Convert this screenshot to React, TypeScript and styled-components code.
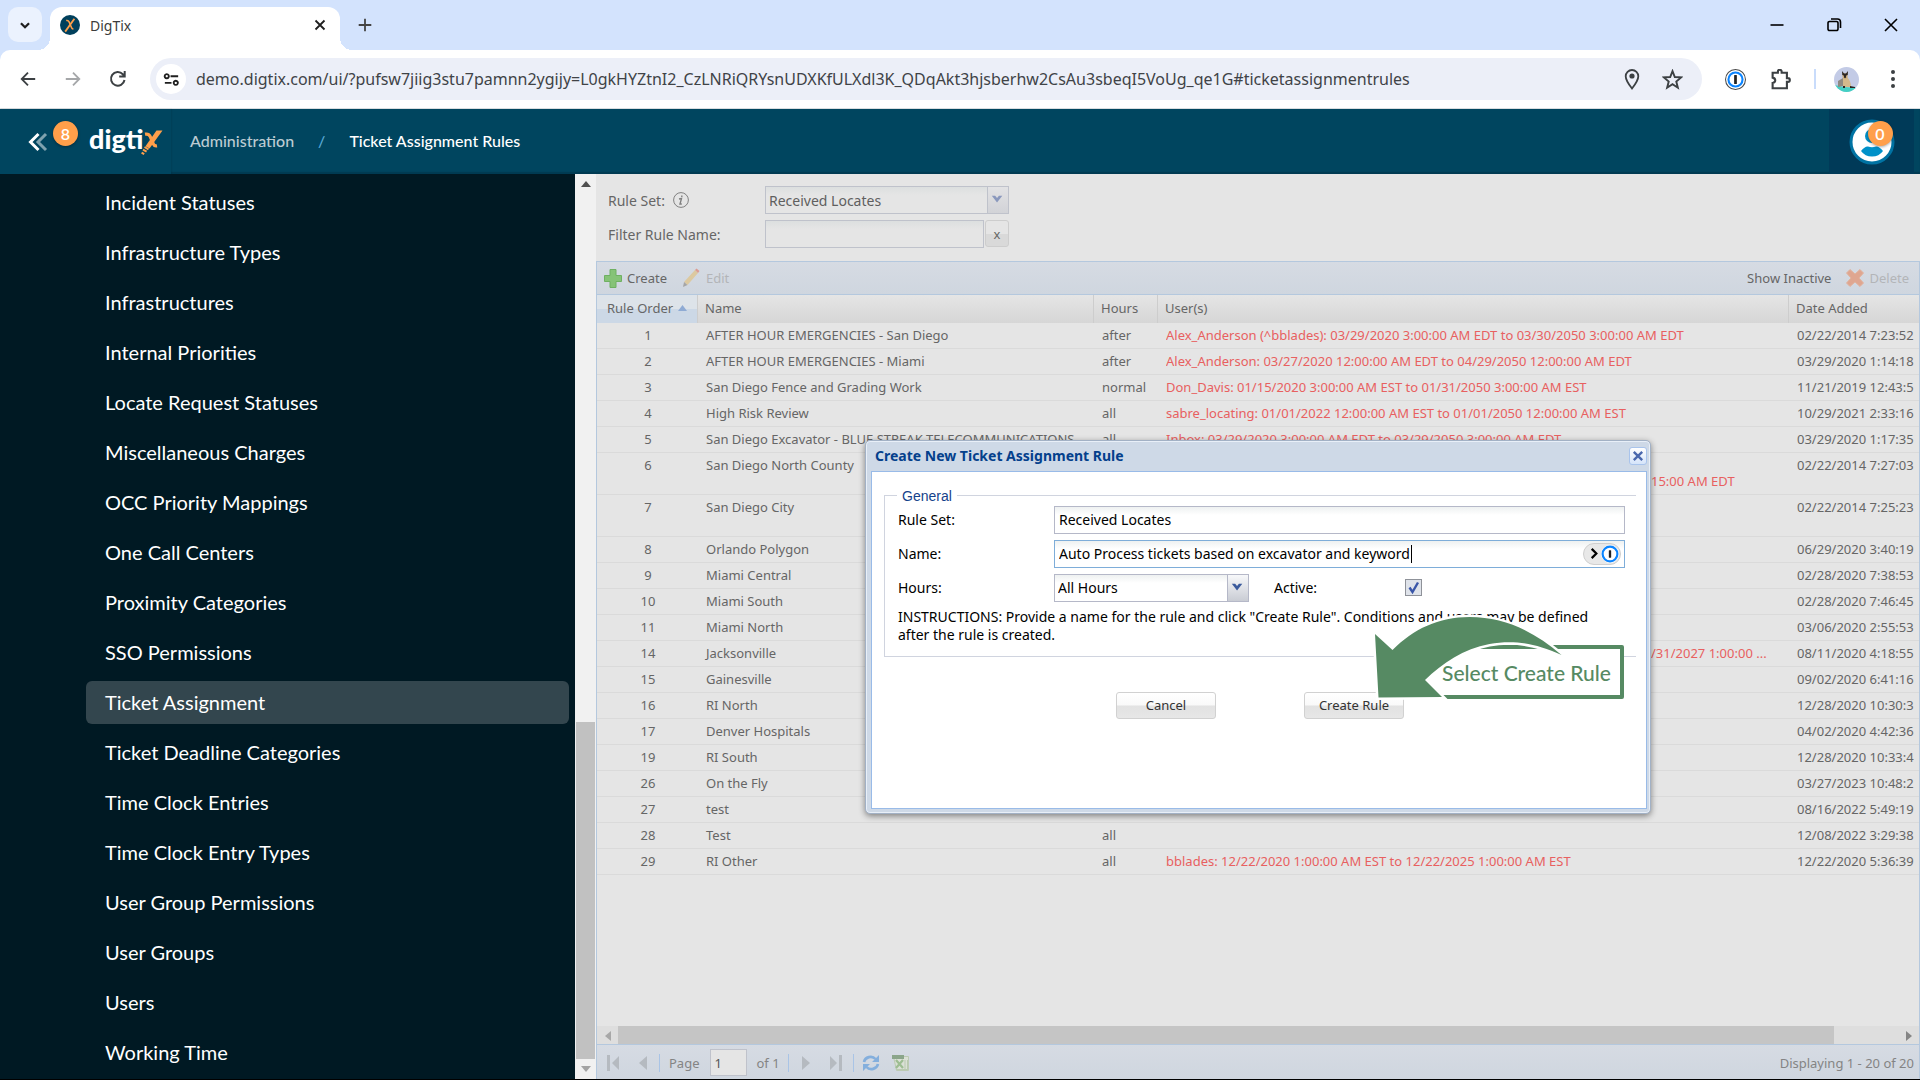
import React from "react";
import styled, { createGlobalStyle, css } from "styled-components";

const UI = '"Noto Sans", "Open Sans", sans-serif';
const BRAND = 'Lato, "Open Sans", sans-serif';

const GlobalStyle = createGlobalStyle`
  *, *::before, *::after { box-sizing: border-box; }
  body { margin: 0; font-family: ${UI}; font-size: 13px; background: #000; }
  button, input, select { font: inherit; color: inherit; margin: 0; }
  button { cursor: pointer; }
  a { color: inherit; text-decoration: none; }
`;

const Page = styled.div`
  display: flex;
  flex-direction: column;
  height: 100vh;
  overflow: hidden;
  border-bottom: 1px solid #000;
`;

/* ---------- browser chrome ---------- */

const TabStrip = styled.div`
  display: flex;
  align-items: flex-end;
  height: 50px;
  flex: none;
  background: #d3e3fd;
  padding: 0 1px 0 8px;
`;

const BareButton = styled.button`
  display: grid;
  place-items: center;
  border: 0;
  padding: 0;
  background: none;
`;

const TabSearch = styled(BareButton)`
  width: 34px;
  height: 35px;
  border-radius: 10px;
  background: #ebf2fe;
  margin-bottom: 8px;
`;

const Tab = styled.div`
  position: relative;
  display: flex;
  align-items: center;
  width: 290px;
  height: 43px;
  margin-left: 8px;
  padding: 0 9px 7px 10px;
  border-radius: 12px 12px 0 0;
  background: #fff;
  color: #3c3c3c;
  font-size: 14px;
  &::before, &::after {
    content: "";
    position: absolute;
    bottom: 0;
    width: 12px;
    height: 12px;
  }
  &::before { left: -12px; background: radial-gradient(circle at 0 0, transparent 12px, #fff 12px); }
  &::after { right: -12px; background: radial-gradient(circle at 100% 0, transparent 12px, #fff 12px); }
`;

const TabTitle = styled.span`
  flex: 1;
  margin-left: 10px;
`;

const TabButton = styled(BareButton)`
  width: 22px;
  height: 22px;
`;

const NewTab = styled(BareButton)`
  width: 34px;
  height: 35px;
  margin: 0 0 8px 8px;
`;

const WindowControls = styled.div`
  display: flex;
  align-self: stretch;
  margin-left: auto;
`;

const WindowButton = styled(BareButton)`
  width: 57px;
  height: 50px;
`;

const ToolbarBack = styled.div`
  flex: none;
  background: #d3e3fd;
`;

const Toolbar = styled.div`
  display: flex;
  align-items: center;
  height: 59px;
  padding: 0 11px;
  border-radius: 10px 10px 0 0;
  border-bottom: 1px solid #d9dde0;
  background: #fff;
`;

const ToolButton = styled(BareButton)`
  width: 33px;
  height: 33px;
  flex: none;
  & + & { margin-left: 12px; }
`;

const AddressBar = styled.div`
  display: flex;
  align-items: center;
  flex: 1;
  min-width: 0;
  height: 42px;
  margin: 0 17px 0 16px;
  padding: 0 14px 0 6px;
  border-radius: 21px;
  background: #eceff8;
`;

const SiteInfo = styled(BareButton)`
  width: 30px;
  height: 30px;
  border-radius: 50%;
  background: #fff;
  flex: none;
`;

const UrlInput = styled.input`
  flex: 1;
  min-width: 0;
  border: 0;
  padding: 0 0 1px 10px;
  background: none;
  outline: none;
  font-size: 16px;
  color: #404347;
`;

const AddressAction = styled(BareButton)`
  width: 32px;
  height: 32px;
  flex: none;
  & + & { margin-left: 8px; }
`;

const ToolDivider = styled.span`
  width: 2px;
  height: 20px;
  margin: 0 18px 0 17px;
  background: #c9dcfb;
`;

const Profile = styled(BareButton)`
  width: 25px;
  height: 25px;
  margin-right: 17px;
`;

/* ---------- application header ---------- */

const Header = styled.header`
  display: flex;
  align-items: stretch;
  flex: none;
  height: 65px;
  padding-right: 6px;
  background: #00455f;
  box-shadow: inset 0 -2px 1px #003a52;
  color: #fff;
  font-family: ${BRAND};
`;

const BrandBlock = styled.div`
  display: flex;
  align-items: center;
  width: 171px;
  padding-left: 28px;
  background: #00455f;
  box-shadow: 1px 0 1px rgba(0, 30, 45, 0.12);
`;

const Collapse = styled(BareButton)`
  position: relative;
  width: 20px;
  height: 24px;
`;

const Badge = styled.span<{ $left: number; $top: number }>`
  position: absolute;
  left: ${(p) => p.$left}px;
  top: ${(p) => p.$top}px;
  display: grid;
  place-items: center;
  width: 25px;
  height: 25px;
  border-radius: 50%;
  background: #ff9f4a;
  box-shadow: 0 1px 3px rgba(0, 0, 0, 0.35);
  color: #fff;
  font-family: ${BRAND};
  font-size: 16px;
  font-weight: 600;
`;

const Logo = styled.a`
  display: flex;
  align-items: center;
  margin-left: 41px;
  padding-bottom: 6px;
  font-size: 27px;
  font-weight: 900;
  line-height: 30px;
  svg { margin: 8px 0 0 -3px; }
`;

const Crumbs = styled.nav`
  display: flex;
  flex: 1;
  align-items: center;
  gap: 24px;
  padding: 0 0 3px 19px;
  font-size: 16px;
  font-weight: 500;
  a { color: #bccbd2; }
  i { color: #5aa9d6; font-style: normal; }
`;

const UserMenu = styled(BareButton)`
  width: 85px;
  background: #003a58;
`;

const UserBadgeWrap = styled.span`
  position: relative;
  display: block;
  width: 46px;
  height: 46px;
`;

/* ---------- body ---------- */

const Body = styled.div`
  display: flex;
  flex: 1;
  min-height: 0;
`;

const Sidebar = styled.nav`
  display: flex;
  width: 596px;
  flex: none;
  background: #001923;
`;

const MenuList = styled.ul`
  display: flex;
  flex: 1;
  flex-direction: column;
  gap: 7px;
  margin: 0;
  padding: 7px 6px 0 86px;
  list-style: none;
  overflow: hidden;
`;

const MenuLink = styled.a<{ $active: boolean }>`
  display: flex;
  align-items: center;
  height: 43px;
  padding: 0 0 2px 19px;
  border-radius: 6px;
  color: #fff;
  font-family: ${BRAND};
  font-size: 20px;
  background: ${(p) => (p.$active ? "#33464e" : "transparent")};
`;

const VScroll = styled.div`
  display: flex;
  flex-direction: column;
  width: 21px;
  background: #f1f1f1;
`;

const VTrack = styled.div`
  flex: 1;
  display: flex;
  flex-direction: column;
  justify-content: flex-end;
  padding: 0 1px;
`;

const VThumb = styled.div`
  height: 39%;
  background: #c1c1c1;
`;

const ScrollArrow = styled(BareButton)`
  width: 21px;
  height: 20px;
`;

const Main = styled.main`
  position: relative;
  display: flex;
  flex: 1;
  flex-direction: column;
  min-width: 0;
  background: #e5e5e5;
  color: #666;
`;

const FilterForm = styled.form`
  display: grid;
  grid-template-columns: 157px 244px;
  grid-auto-rows: 28px;
  row-gap: 6px;
  align-items: center;
  padding: 12px 12px 13px;
  font-size: 14px;
`;

const FieldLabel = styled.label`
  display: flex;
  align-items: center;
  gap: 8px;
`;

const SelectBox = styled.span<{ $dim?: boolean; $width: number }>`
  position: relative;
  display: block;
  width: ${(p) => p.$width}px;
  height: 28px;
  select {
    appearance: none;
    width: 100%;
    height: 28px;
    padding: 0 24px 0 3px;
    border: 1px solid ${(p) => (p.$dim ? "#bfc2cb" : "#b5b8c8")};
    border-radius: 0;
    outline: none;
    background: ${(p) =>
      p.$dim ? "linear-gradient(#dcdfdf, #e5e5e5 8px)" : "linear-gradient(#eef1f1, #fff 8px)"};
    color: ${(p) => (p.$dim ? "#5f5f5f" : "#000")};
  }
  svg {
    position: absolute;
    top: 1px;
    right: 1px;
    width: 21px;
    height: 26px;
    border-left: 1px solid ${(p) => (p.$dim ? "#bfc2cb" : "#b5b8c8")};
    background: ${(p) =>
      p.$dim ? "linear-gradient(#e2e2e4, #d2d3d7)" : "linear-gradient(#f7f8fa, #c9ccd4)"};
    pointer-events: none;
  }
`;

const FilterBox = styled.span`
  display: flex;
  gap: 1px;
  input {
    flex: 1;
    min-width: 0;
    height: 28px;
    padding: 0 4px;
    border: 1px solid #bfc2cb;
    outline: none;
    background: linear-gradient(#dcdfdf, #e5e5e5 8px);
  }
  button {
    width: 24px;
    height: 27px;
    padding: 0;
    border: 1px solid #cdcdcd;
    border-radius: 3px;
    background: linear-gradient(#e5e5e5 50%, #d9d9d9 50%);
    font-size: 13px;
    line-height: 24px;
  }
`;

const GridBar = styled.div`
  display: flex;
  align-items: center;
  flex: none;
  height: 34px;
  padding: 0 10px 0 7px;
  border: 1px solid #b4c8de;
  background: linear-gradient(#d6dbe3, #cfd6df);
`;

const BarButton = styled.button<{ $muted?: boolean }>`
  display: flex;
  align-items: center;
  gap: 5px;
  padding: 0;
  border: 0;
  background: none;
  color: ${(p) => (p.$muted ? "#b3b5b8" : "#666")};
  line-height: 20px;
`;

const BarSpace = styled.span<{ $w?: number }>`
  ${(p) => (p.$w ? css`width: ${p.$w}px;` : css`flex: 1;`)}
`;

const GridBody = styled.div`
  flex: 1;
  min-height: 0;
  overflow: hidden;
  border-left: 1px solid #b4c8de;
  border-right: 1px solid #b4c8de;
`;

const RuleTable = styled.table`
  width: 100%;
  table-layout: fixed;
  border-collapse: separate;
  border-spacing: 0;
  line-height: 16px;
  th {
    height: 28px;
    padding: 0 7px 3px;
    border-right: 1px solid #cdcdcd;
    background: linear-gradient(#e5e5e5, #d6d6d6);
    font-weight: 400;
    text-align: left;
    white-space: nowrap;
  }
  th:first-child {
    padding-left: 10px;
    background: linear-gradient(#dde3e9 50%, #ccd8e6 50%);
  }
  td {
    padding: 4px 7px 5px 8px;
    border-bottom: 1px solid #dadada;
    overflow: hidden;
    text-overflow: ellipsis;
    white-space: nowrap;
    vertical-align: top;
  }
  td:first-child { text-align: center; }
  td:last-child { padding-right: 0; text-overflow: clip; }
  th:last-child { border-right: 0; }
`;

const UserLine = styled.div`
  min-height: 16px;
  overflow: hidden;
  text-overflow: ellipsis;
  color: #e86060;
`;

const UserTail = styled(UserLine)`
  padding-left: 485px;
`;

const SortMark = styled.svg`
  margin: 0 0 2px 5px;
`;

const HScroll = styled.div`
  display: flex;
  flex: none;
  height: 18px;
  border-left: 1px solid #b4c8de;
  border-right: 1px solid #b4c8de;
  background: #dedede;
`;

const HTrack = styled.div`
  flex: 1;
`;

const HThumb = styled.div`
  width: 95%;
  height: 18px;
  background: #c5c5c5;
`;

const Paging = styled(GridBar)`
  height: 35px;
  padding: 1px 5px 0 8px;
  border-bottom: 0;
  color: #848484;
`;

const PageIcon = styled(BareButton)`
  width: 16px;
  height: 20px;
`;

const PageRule = styled.span<{ $before: number; $after: number }>`
  width: 1px;
  height: 18px;
  margin: 0 ${(p) => p.$after}px 0 ${(p) => p.$before}px;
  background: #a9c4e6;
`;

const PageLabel = styled.label`
  display: flex;
  align-items: center;
  gap: 10px;
  input {
    width: 37px;
    height: 27px;
    padding: 0 4px;
    border: 1px solid #bfc2cb;
    outline: none;
    background: #e5e5e5;
    color: #555;
  }
`;

/* ---------- dialog ---------- */

const DialogLayer = styled.div`
  position: absolute;
  inset: 0;
  display: grid;
  place-items: center;
`;

const Dialog = styled.section`
  position: relative;
  display: flex;
  flex-direction: column;
  width: 786px;
  height: 374px;
  padding: 0 3px 4px 5px;
  border: 1px solid #a2b1c5;
  border-radius: 5px;
  background: #ced9e7;
  box-shadow: inset 0 0 0 1px #e8eff8, 0 2px 6px rgba(0, 0, 0, 0.45);
  color: #000;
  font-size: 14px;
`;

const DialogHead = styled.header`
  display: flex;
  align-items: center;
  justify-content: space-between;
  height: 30px;
  padding: 0 0 0 4px;
  color: #04408c;
  h2 { margin: 0; font-size: 14px; font-weight: 700; line-height: 20px; }
`;

const CloseButton = styled(BareButton)`
  width: 18px;
  height: 18px;
  border: 1px solid #a9c4ec;
  border-radius: 3px;
  background: linear-gradient(#fff, #d5e4fa);
`;

const DialogBody = styled.form`
  flex: 1;
  padding: 15px 10px 0 12px;
  border: 1px solid #99bbe8;
  background: #fff;
`;

const General = styled.fieldset`
  margin: 0;
  padding: 1px 11px 12px 13px;
  border: 1px solid #d0d4df;
  border-right: 0;
  min-width: 0;
  legend {
    margin-left: -1px;
    padding: 0 5px;
    font-family: "Liberation Sans", Arial, sans-serif;
    font-size: 14px;
    line-height: 18px;
    color: #15428b;
  }
`;

const FormGrid = styled.div`
  display: grid;
  grid-template-columns: 156px 1fr;
  grid-auto-rows: 28px;
  row-gap: 6px;
  align-items: center;
`;

const TextInput = styled.input<{ $focused?: boolean }>`
  width: 100%;
  height: 28px;
  padding: 0 4px;
  border: 1px solid ${(p) => (p.$focused ? "#7eadd9" : "#b5b8c8")};
  outline: none;
  background: linear-gradient(#eef1f1, #fff 8px);
`;

const NameBox = styled.span`
  position: relative;
  display: block;
`;

const Caret = styled.span`
  position: absolute;
  left: 357px;
  top: 5px;
  width: 1px;
  height: 18px;
  background: #000;
`;

const FillButton = styled(BareButton)`
  position: absolute;
  top: 3px;
  right: 4px;
  display: flex;
  align-items: center;
  justify-content: space-between;
  width: 38px;
  height: 22px;
  padding: 0 1px 0 4px;
  border: 1px solid #cfcfcf;
  border-radius: 11px;
  background: #e8e8e8;
`;

const HoursRow = styled.div`
  display: flex;
  align-items: center;
  label { width: 131px; margin-left: 25px; }
`;

const CheckBox = styled.input`
  appearance: none;
  width: 17px;
  height: 17px;
  border: 1px solid #8f9299;
  background: #dfe3ea url("data:image/svg+xml,%3Csvg xmlns='http://www.w3.org/2000/svg' viewBox='0 0 15 15'%3E%3Cpath d='M3.5 7.5l3 4.5L12 2.5' fill='none' stroke='%233a56a8' stroke-width='2.4'/%3E%3C/svg%3E") center / 15px 15px;
`;

const Instructions = styled.p`
  margin: 6px 0 0;
  padding-right: 11px;
  line-height: 18px;
`;

const Actions = styled.div`
  display: flex;
  justify-content: center;
  gap: 88px;
  margin-top: 35px;
`;

const ActionButton = styled.button`
  width: 100px;
  height: 27px;
  padding: 0;
  border: 1px solid #d1d1d1;
  border-radius: 3px;
  background: linear-gradient(#fff, #f9f9f9 48%, #e2e2e2 52%, #e7e7e7);
  color: #333;
  font-size: 13px;
`;

const Callout = styled.div`
  position: absolute;
  left: 502px;
  top: 169px;
  width: 256px;
  height: 96px;
  padding: 35px 0 7px 47px;
  svg { position: absolute; left: 0; top: 0; }
`;

const CalloutText = styled.div`
  display: flex;
  align-items: center;
  justify-content: flex-end;
  height: 54px;
  padding: 2px 9px 0 0;
  border: 4px solid #568a63;
  border-radius: 2px;
  background: #fff;
  color: #568a63;
  font-family: ${BRAND};
  font-size: 21px;
  font-weight: 500;
  span { position: relative; z-index: 1; }
`;

/* ---------- data ---------- */

const menu = [
  "Incident Statuses", "Infrastructure Types", "Infrastructures", "Internal Priorities",
  "Locate Request Statuses", "Miscellaneous Charges", "OCC Priority Mappings",
  "One Call Centers", "Proximity Categories", "SSO Permissions", "Ticket Assignment",
  "Ticket Deadline Categories", "Time Clock Entries", "Time Clock Entry Types",
  "User Group Permissions", "User Groups", "Users", "Working Time",
];

type Rule = { order: number; name: string; hours: string; users: string; tail?: string; date: string };

const rules: Rule[] = [
  { order: 1, name: "AFTER HOUR EMERGENCIES - San Diego", hours: "after", users: "Alex_Anderson (^bblades): 03/29/2020 3:00:00 AM EDT to 03/30/2050 3:00:00 AM EDT", date: "02/22/2014 7:23:52" },
  { order: 2, name: "AFTER HOUR EMERGENCIES - Miami", hours: "after", users: "Alex_Anderson: 03/27/2020 12:00:00 AM EDT to 04/29/2050 12:00:00 AM EDT", date: "03/29/2020 1:14:18" },
  { order: 3, name: "San Diego Fence and Grading Work", hours: "normal", users: "Don_Davis: 01/15/2020 3:00:00 AM EST to 01/31/2050 3:00:00 AM EST", date: "11/21/2019 12:43:5" },
  { order: 4, name: "High Risk Review", hours: "all", users: "sabre_locating: 01/01/2022 12:00:00 AM EST to 01/01/2050 12:00:00 AM EST", date: "10/29/2021 2:33:16" },
  { order: 5, name: "San Diego Excavator - BLUE STREAK TELECOMMUNICATIONS", hours: "all", users: "Inbox: 03/29/2020 3:00:00 AM EDT to 03/29/2050 3:00:00 AM EDT", date: "03/29/2020 1:17:35" },
  { order: 6, name: "San Diego North County", hours: "", users: "", tail: "15:00 AM EDT", date: "02/22/2014 7:27:03" },
  { order: 7, name: "San Diego City", hours: "", users: "", tail: "", date: "02/22/2014 7:25:23" },
  { order: 8, name: "Orlando Polygon", hours: "", users: "", date: "06/29/2020 3:40:19" },
  { order: 9, name: "Miami Central", hours: "", users: "", date: "02/28/2020 7:38:53" },
  { order: 10, name: "Miami South", hours: "", users: "", date: "02/28/2020 7:46:45" },
  { order: 11, name: "Miami North", hours: "", users: "", date: "03/06/2020 2:55:53" },
  { order: 14, name: "Jacksonville", hours: "", users: "/31/2027 1:00:00 ...", date: "08/11/2020 4:18:55" },
  { order: 15, name: "Gainesville", hours: "", users: "", date: "09/02/2020 6:41:16" },
  { order: 16, name: "RI North", hours: "", users: "", date: "12/28/2020 10:30:3" },
  { order: 17, name: "Denver Hospitals", hours: "", users: "", date: "04/02/2020 4:42:36" },
  { order: 19, name: "RI South", hours: "", users: "", date: "12/28/2020 10:33:4" },
  { order: 26, name: "On the Fly", hours: "", users: "", date: "03/27/2023 10:48:2" },
  { order: 27, name: "test", hours: "", users: "", date: "08/16/2022 5:49:19" },
  { order: 28, name: "Test", hours: "all", users: "", date: "12/08/2022 3:29:38" },
  { order: 29, name: "RI Other", hours: "all", users: "bblades: 12/22/2020 1:00:00 AM EST to 12/22/2025 1:00:00 AM EST", date: "12/22/2020 5:36:39" },
];

/* ---------- drawings ---------- */

type StrokeProps = { d: string; size?: number; color?: string; width?: number; box?: number };

const Stroke = ({ d, size = 20, color = "#3c4043", width = 2, box = 20 }: StrokeProps) => (
  <svg width={size} height={size} viewBox={`0 0 ${box} ${box}`} fill="none" stroke={color} strokeWidth={width} aria-hidden="true">
    <path d={d} />
  </svg>
);

const Triangle = ({ d, color }: { d: string; color: string }) => (
  <svg width="10" height="10" viewBox="0 0 10 10" fill={color} aria-hidden="true"><path d={d} /></svg>
);

const Favicon = () => (
  <svg width="20" height="20" viewBox="0 0 20 20" aria-hidden="true">
    <circle cx="10" cy="10" r="10" fill="#00405c" />
    <path d="M6.2 5.6q2-.6 2.8 1.2l2.6 6q.5 1.2 1.8 1" fill="none" stroke="#ff9f4a" strokeWidth="1.6" />
    <path d="M14.4 3.8L5.2 16.6" stroke="#ff9f4a" strokeWidth="1.8" />
  </svg>
);

const LogoX = () => (
  <svg width="23" height="27" viewBox="0 0 23 27" fill="none" stroke="#ff9f4a" aria-hidden="true">
    <path d="M5 5.200c3-.5 4.200.3 5 2l3.400 8c.7 1.600 1.900 2 3.600 1.700" strokeWidth="3.2" />
    <path d="M16.500 1.500h6L9.500 19.500l-4-2.200z" fill="#ff9f4a" stroke="none" />
    <path d="M8.500 20.300l-4-2.300M6.600 22.700l-3.600-2M4.200 25.200l-2.600-1.600" strokeWidth="2" />
  </svg>
);

const OnePass = ({ size, ring }: { size: number; ring?: boolean }) => (
  <svg width={size} height={size} viewBox="0 0 20 20" aria-hidden="true">
    <circle cx="10" cy="10" r="9.5" fill="#fff" stroke={ring ? "#4a4a4a" : "#fff"} strokeWidth="1" />
    <circle cx="10" cy="10" r={ring ? 6.7 : 8.2} fill="#fff" stroke="#0a84ff" strokeWidth={ring ? 2 : 2.4} />
    <rect x="8.7" y="5.8" width="2.6" height="8.4" rx=".5" fill="#222" />
  </svg>
);

const ProfileCat = () => (
  <svg width="25" height="25" viewBox="0 0 25 25" aria-hidden="true">
    <defs><clipPath id="round"><circle cx="12.5" cy="12.5" r="12.5" /></clipPath></defs>
    <g clipPath="url(#round)">
      <path fill="#c3cbe6" d="M0 0h25v25H0z" />
      <path fill="#44d0c4" d="M0 18q12 3 25 3v4H0z" />
      <path fill="#8f8a82" d="M4 14l5-3v8l-5 1z" />
      <path fill="#d3b98c" d="M9 10h4c3 3 4 6 4 10H9z" />
      <path fill="#c9a877" d="M8.500 6.500h5v4l-2.500 2-2.500-2z" />
      <path fill="#2b2522" d="M8 4l2 2.500h2L14 4l-.3 4-1.500.5-.5 2.500h-1.400l-.5-2.500L8.300 8zM9 19h2v2H9zM16 19l5 1v1h-5z" />
    </g>
  </svg>
);

const UserGlyph = () => (
  <svg width="46" height="46" viewBox="0 0 46 46" aria-hidden="true">
    <circle cx="23" cy="23" r="21" fill="#fff" stroke="#0073a3" strokeWidth="3" />
    <circle cx="23" cy="17" r="7" fill="#0091c9" />
    <path d="M12 32q4-5 7-4.500 4 1.500 8 0 3-.5 7 4.500-4 5.500-11 5.500T12 32z" fill="#0091c9" />
  </svg>
);

const PlusIcon = () => (
  <svg width="18" height="19" viewBox="0 0 18 19" aria-hidden="true">
    <path d="M6 .5h6v6h5.500v6H12v6H6v-6H.5v-6H6z" fill="#86c377" stroke="#6fb062" />
  </svg>
);

const PencilIcon = () => (
  <svg width="19" height="20" viewBox="0 0 19 20" aria-hidden="true">
    <path d="M2 14L13 2l3 3L5.500 17z" fill="#dcc9a0" />
    <path d="M13 2l1.500-1.500 3 2.500L16 5z" fill="#dc9c92" />
    <path d="M2 14l3.500 3L1 19z" fill="#a5a5a5" />
  </svg>
);

const DeleteIcon = () => (
  <svg width="18" height="18" viewBox="0 0 18 18" aria-hidden="true">
    <path d="M4 .5L9 5l5-4.500L17.500 4 13 9l4.500 5-3.500 3.500L9 13l-5 4.500L.5 14 5 9 .5 4z" fill="#dfa690" stroke="#e0b39f" />
  </svg>
);

const RefreshIcon = () => (
  <svg width="18" height="18" viewBox="0 0 18 18" fill="none" aria-hidden="true">
    <path d="M2 8c1-5 8-7 11.500-3M16 10c-1 5-8 7-11.500 3" stroke="#84afdd" strokeWidth="2.6" />
    <path d="M17 1v7h-7zM1 17v-7h7z" fill="#84afdd" />
  </svg>
);

const SheetIcon = () => (
  <svg width="18" height="18" viewBox="0 0 18 18" aria-hidden="true">
    <path fill="#dbe0d6" stroke="#bccab3" d="M1.500 2.500h15v14h-12z" />
    <path fill="#8ba58a" d="M0 1h12v4H0z" />
    <path d="M4 6l7 8M11 6l-7 8" stroke="#9dbd92" strokeWidth="2.2" />
    <path d="M13 6v9M15.500 6v9M4 15.500h12" stroke="#b9cab0" />
  </svg>
);

const CalloutArrow = () => (
  <svg width="256" height="96" viewBox="1368 610 256 96" aria-hidden="true">
    <path
      d="M1375 634l17.500 16c21-21 46-33 77-33 35 0 64 14 92 38-28-13-50-15-72-11-26 5-47 19-64.500 36l17 17-63.500.500z"
      fill="#568a63" stroke="#fff" strokeWidth="5" paintOrder="stroke" strokeLinejoin="miter"
    />
  </svg>
);

const Down = ({ color }: { color: string }) => (
  <svg viewBox="0 0 21 26" aria-hidden="true"><path d="M4 8.500h3.500l2 2.500 2-2.500H15l-5.500 7z" fill={color} /></svg>
);

/* ---------- page ---------- */

export default function App() {
  return (
    <Page>
      <GlobalStyle />
      <TabStrip>
        <TabSearch aria-label="Search tabs"><Stroke d="M5.500 8l4.500 4.500L14.500 8" width={2.5} size={18} color="#1f1f1f" /></TabSearch>
        <Tab>
          <Favicon />
          <TabTitle>DigTix</TabTitle>
          <TabButton aria-label="Close tab"><Stroke d="M5 5l10 10M15 5L5 15" size={18} color="#1f1f1f" /></TabButton>
        </Tab>
        <NewTab aria-label="New tab"><Stroke d="M10 3v14M3 10h14" size={18} color="#444" /></NewTab>
        <WindowControls>
          <WindowButton aria-label="Minimize"><Stroke d="M3.500 10h13" width={1.6} color="#000" /></WindowButton>
          <WindowButton aria-label="Restore">
            <Stroke d="M5.500 6.500h7a1.500 1.500 0 0 1 1.500 1.500v6a1.500 1.500 0 0 1-1.500 1.500h-7A1.500 1.500 0 0 1 4 14V8a1.500 1.500 0 0 1 1.500-1.500zM7 4h6.500A3 3 0 0 1 16.500 7v6" width={1.6} color="#000" />
          </WindowButton>
          <WindowButton aria-label="Close window"><Stroke d="M4 4l12 12M16 4L4 16" width={1.6} color="#000" /></WindowButton>
        </WindowControls>
      </TabStrip>

      <ToolbarBack>
        <Toolbar>
          <ToolButton aria-label="Back"><Stroke d="M18 10H3M10 3l-7 7 7 7" size={18} /></ToolButton>
          <ToolButton aria-label="Forward"><Stroke d="M2 10h15M10 3l7 7-7 7" size={18} color="#a5a7a9" /></ToolButton>
          <ToolButton aria-label="Reload"><Stroke d="M16.500 11A6.800 6.800 0 1 1 14.800 5.200L16.500 7M16.700 2v5.500h-5.500" /></ToolButton>
          <AddressBar>
            <SiteInfo aria-label="Site information">
              <Stroke d="M9 6.500h8M3 13.500h7M5 4.300a2.200 2.200 0 1 0 .01 0zM14.500 11.300a2.200 2.200 0 1 0 .01 0z" size={19} color="#1f1f1f" />
            </SiteInfo>
            <UrlInput
              aria-label="Address"
              readOnly
              value="demo.digtix.com/ui/?pufsw7jiig3stu7pamnn2ygijy=L0gkHYZtnI2_CzLNRiQRYsnUDXKfULXdl3K_QDqAkt3hjsberhw2CsAu3sbeqI5VoUg_qe1G#ticketassignmentrules"
            />
            <AddressAction aria-label="Location">
              <svg width="20" height="22" viewBox="0 0 20 22" fill="none" stroke="#3c4043" strokeWidth="1.8" aria-hidden="true">
                <path d="M10 20.500C6 15.500 3.700 12 3.700 8.300a6.300 6.300 0 0 1 12.600 0C16.300 12 14 15.500 10 20.500z" />
                <circle cx="10" cy="8" r="2.6" fill="#3c4043" stroke="none" />
              </svg>
            </AddressAction>
            <AddressAction aria-label="Bookmark">
              <Stroke d="M10 2l2.200 5.600 6 .4-4.600 3.900 1.500 5.900L10 14.500l-5.100 3.300 1.500-5.900L1.800 8l6-.4z" width={1.8} size={21} />
            </AddressAction>
          </AddressBar>
          <ToolButton aria-label="Password manager"><OnePass size={21} ring /></ToolButton>
          <ToolButton aria-label="Extensions">
            <Stroke d="M2.500 3.500h5v-1a1.800 1.800 0 0 1 3.600 0v1h5v5.200h1a1.800 1.800 0 0 1 0 3.600h-1v6H2.500v-5q2.500-.5 2.500-2.500T2.500 8.200z" size={21} />
          </ToolButton>
          <ToolDivider />
          <Profile aria-label="Profile"><ProfileCat /></Profile>
          <ToolButton aria-label="Browser menu">
            <svg width="6" height="20" viewBox="0 0 6 20" fill="#3c4043" aria-hidden="true">
              <circle cx="3" cy="3" r="2" /><circle cx="3" cy="10" r="2" /><circle cx="3" cy="17" r="2" />
            </svg>
          </ToolButton>
        </Toolbar>
      </ToolbarBack>

      <Header>
        <BrandBlock>
          <Collapse aria-label="Collapse menu, 8 notifications">
            <svg width="20" height="20" viewBox="0 0 20 20" fill="none" strokeWidth="3" aria-hidden="true">
              <path d="M18 2l-8 8 8 8" stroke="#7fa2af" /><path d="M10.500 2l-8 8 8 8" stroke="#fff" />
            </svg>
            <Badge $left={25} $top={-9}>8</Badge>
          </Collapse>
          <Logo href="#home">digti<LogoX /></Logo>
        </BrandBlock>
        <Crumbs aria-label="Breadcrumb">
          <a href="#administration">Administration</a>
          <i>/</i>
          <span>Ticket Assignment Rules</span>
        </Crumbs>
        <UserMenu aria-label="User menu">
          <UserBadgeWrap><UserGlyph /><Badge $left={19} $top={2}>0</Badge></UserBadgeWrap>
        </UserMenu>
      </Header>

      <Body>
        <Sidebar aria-label="Administration">
          <MenuList>
            {menu.map((item) => (
              <li key={item}><MenuLink href="#menu" $active={item === "Ticket Assignment"}>{item}</MenuLink></li>
            ))}
          </MenuList>
          <VScroll>
            <ScrollArrow aria-label="Scroll up"><Triangle d="M0 8l5-6 5 6z" color="#505050" /></ScrollArrow>
            <VTrack><VThumb /></VTrack>
            <ScrollArrow aria-label="Scroll down"><Triangle d="M0 2l5 6 5-6z" color="#a3a3a3" /></ScrollArrow>
          </VScroll>
        </Sidebar>

        <Main>
          <FilterForm>
            <FieldLabel htmlFor="set">
              Rule Set:
              <svg width="16" height="16" viewBox="0 0 16 16" fill="none" stroke="#808080" aria-hidden="true">
                <circle cx="8" cy="8" r="7.4" />
                <path d="M6 7l2.500-.5L7 12h1.800M8.800 3.500v1.600" strokeWidth="1.4" />
              </svg>
            </FieldLabel>
            <SelectBox $dim $width={244}>
              <select id="set"><option>Received Locates</option></select>
              <Down color="#8a98bd" />
            </SelectBox>
            <FieldLabel htmlFor="filter">Filter Rule Name:</FieldLabel>
            <FilterBox><input id="filter" type="text" /><button type="button">x</button></FilterBox>
          </FilterForm>

          <GridBar>
            <BarButton><PlusIcon />Create</BarButton>
            <BarSpace $w={15} />
            <BarButton $muted><PencilIcon />Edit</BarButton>
            <BarSpace />
            <BarButton>Show Inactive</BarButton>
            <BarSpace $w={15} />
            <BarButton $muted><DeleteIcon />Delete</BarButton>
          </GridBar>

          <GridBody>
            <RuleTable>
              <colgroup>
                <col width="101" /><col width="396" /><col width="64" /><col width="631" /><col />
              </colgroup>
              <thead>
                <tr>
                  <th>Rule Order<SortMark width="9" height="6" viewBox="0 0 9 6" fill="#8fabd4"><path d="M0 6l4.500-6L9 6z" /></SortMark></th>
                  <th>Name</th><th>Hours</th><th>User(s)</th><th>Date Added</th>
                </tr>
              </thead>
              <tbody>
                {rules.map((r) => (
                  <tr key={r.order}>
                    <td>{r.order}</td>
                    <td>{r.name}</td>
                    <td>{r.hours}</td>
                    <td>
                      {r.users.startsWith("/") ? <UserTail>{r.users}</UserTail> : <UserLine>{r.users}</UserLine>}
                      {r.tail !== undefined && <UserTail>{r.tail}</UserTail>}
                    </td>
                    <td>{r.date}</td>
                  </tr>
                ))}
              </tbody>
            </RuleTable>
          </GridBody>

          <HScroll>
            <ScrollArrow aria-label="Scroll left"><Triangle d="M8 0L2 5l6 5z" color="#a8a8a8" /></ScrollArrow>
            <HTrack><HThumb /></HTrack>
            <ScrollArrow aria-label="Scroll right"><Triangle d="M2 0l6 5-6 5z" color="#858585" /></ScrollArrow>
          </HScroll>
          <Paging>
            <PageIcon aria-label="First page"><svg width="14" height="16" viewBox="0 0 14 16" fill="#b5bac0"><path d="M1 0h3v16H1zM13 1v14L6 8z" /></svg></PageIcon>
            <BarSpace $w={14} />
            <PageIcon aria-label="Previous page"><svg width="10" height="16" viewBox="0 0 10 16" fill="#b5bac0"><path d="M9 1v14L1 8z" /></svg></PageIcon>
            <PageRule $before={8} $after={9} />
            <PageLabel>Page<input defaultValue="1" /></PageLabel>
            <BarSpace $w={10} />
            <span>of 1</span>
            <PageRule $before={8} $after={9} />
            <PageIcon aria-label="Next page"><svg width="10" height="16" viewBox="0 0 10 16" fill="#b5bac0"><path d="M1 1v14l8-7z" /></svg></PageIcon>
            <BarSpace $w={14} />
            <PageIcon aria-label="Last page"><svg width="14" height="16" viewBox="0 0 14 16" fill="#b5bac0"><path d="M10 0h3v16h-3zM1 1v14l7-7z" /></svg></PageIcon>
            <PageRule $before={9} $after={8} />
            <PageIcon aria-label="Refresh"><RefreshIcon /></PageIcon>
            <BarSpace $w={14} />
            <PageIcon aria-label="Export to spreadsheet"><SheetIcon /></PageIcon>
            <BarSpace />
            <span>Displaying 1 - 20 of 20</span>
          </Paging>

          <DialogLayer>
            <Dialog role="dialog" aria-labelledby="dialog-title">
              <DialogHead>
                <h2 id="dialog-title">Create New Ticket Assignment Rule</h2>
                <CloseButton aria-label="Close dialog"><Stroke d="M4 4l12 12M16 4L4 16" size={14} width={3.4} color="#4a68ae" /></CloseButton>
              </DialogHead>
              <DialogBody>
                <General>
                  <legend>General</legend>
                  <FormGrid>
                    <label htmlFor="rule-set">Rule Set:</label>
                    <TextInput id="rule-set" defaultValue="Received Locates" />
                    <label htmlFor="rule-name">Name:</label>
                    <NameBox>
                      <TextInput id="rule-name" $focused defaultValue="Auto Process tickets based on excavator and keyword" />
                      <Caret />
                      <FillButton type="button" aria-label="Fill from password manager">
                        <Stroke d="M4 2l5 5-5 5" box={14} size={13} width={2.4} color="#000" />
                        <OnePass size={18} />
                      </FillButton>
                    </NameBox>
                    <label htmlFor="hours">Hours:</label>
                    <HoursRow>
                      <SelectBox $width={195}>
                        <select id="hours"><option>All Hours</option></select>
                        <Down color="#3a5a9c" />
                      </SelectBox>
                      <label htmlFor="active">Active:</label>
                      <CheckBox id="active" type="checkbox" defaultChecked />
                    </HoursRow>
                  </FormGrid>
                  <Instructions>
                    INSTRUCTIONS: Provide a name for the rule and click "Create Rule". Conditions and users may be defined after the rule is created.
                  </Instructions>
                </General>
                <Actions>
                  <ActionButton type="button">Cancel</ActionButton>
                  <ActionButton type="button">Create Rule</ActionButton>
                </Actions>
              </DialogBody>
              <Callout>
                <CalloutText><span>Select Create Rule</span></CalloutText>
                <CalloutArrow />
              </Callout>
            </Dialog>
          </DialogLayer>
        </Main>
      </Body>
    </Page>
  );
}
